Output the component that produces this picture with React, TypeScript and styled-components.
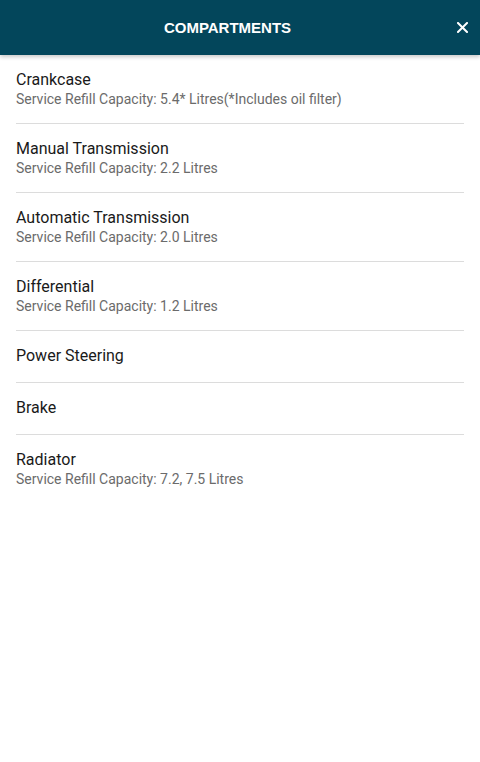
import React from "react";
import styled, { createGlobalStyle } from "styled-components";

const Global = createGlobalStyle`
  html, body { margin: 0; padding: 0; background: #fff; }
  body { font-family: Roboto, "Noto Sans", sans-serif; }
  * { box-sizing: border-box; }
`;

const Page = styled.div`
  width: 480px;
  min-height: 762px;
  background: #fff;
  display: flex;
  flex-direction: column;
`;

const Header = styled.header`
  height: 55px;
  background: #03465b;
  display: flex;
  align-items: center;
  box-shadow: 0 2px 4px rgba(0, 0, 0, 0.22);
  position: relative;
  z-index: 1;
`;

const Title = styled.h1`
  flex: 1;
  margin: 0;
  text-align: center;
  color: #fff;
  font-family: "Liberation Sans", Arial, sans-serif;
  font-weight: 700;
  font-size: 15px;
  line-height: 20px;
`;

const Close = styled.button`
  width: 25px;
  height: 20px;
  padding: 0 0 0 2px;
  border: 0;
  background: transparent;
  display: flex;
  align-items: center;
  justify-content: flex-start;
  cursor: pointer;
`;

const List = styled.ul`
  list-style: none;
  margin: 0;
  padding: 0 16px;
`;

const Item = styled.li<{ $last?: boolean }>`
  padding: 14px 0 16px;
  border-bottom: 1px solid ${(p) => (p.$last ? "transparent" : "#dcdcdc")};
  display: flex;
  flex-direction: column;
`;

const ItemTitle = styled.div`
  font-size: 16px;
  line-height: 21px;
  color: #1a1a1a;
`;

const ItemSub = styled.div`
  font-size: 14px;
  line-height: 17px;
  padding-top: 1px;
  margin-bottom: -1px;
  color: #6b6b6b;
`;

const items: { name: string; sub?: string }[] = [
  { name: "Crankcase", sub: "Service Refill Capacity: 5.4* Litres(*Includes oil filter)" },
  { name: "Manual Transmission", sub: "Service Refill Capacity: 2.2 Litres" },
  { name: "Automatic Transmission", sub: "Service Refill Capacity: 2.0 Litres" },
  { name: "Differential", sub: "Service Refill Capacity: 1.2 Litres" },
  { name: "Power Steering" },
  { name: "Brake" },
  { name: "Radiator", sub: "Service Refill Capacity: 7.2, 7.5 Litres" },
];

export default function App() {
  return (
    <Page>
      <Global />
      <Header>
        <Title>COMPARTMENTS</Title>
        <Close aria-label="Close">
          <svg width="11" height="11" viewBox="0 0 11 11">
            <path d="M1 1 L10 10 M10 1 L1 10" stroke="#fff" strokeWidth="2" strokeLinecap="square" />
          </svg>
        </Close>
      </Header>
      <List>
        {items.map((it, i) => (
          <Item key={it.name} $last={i === items.length - 1}>
            <ItemTitle>{it.name}</ItemTitle>
            {it.sub && <ItemSub>{it.sub}</ItemSub>}
          </Item>
        ))}
      </List>
    </Page>
  );
}
